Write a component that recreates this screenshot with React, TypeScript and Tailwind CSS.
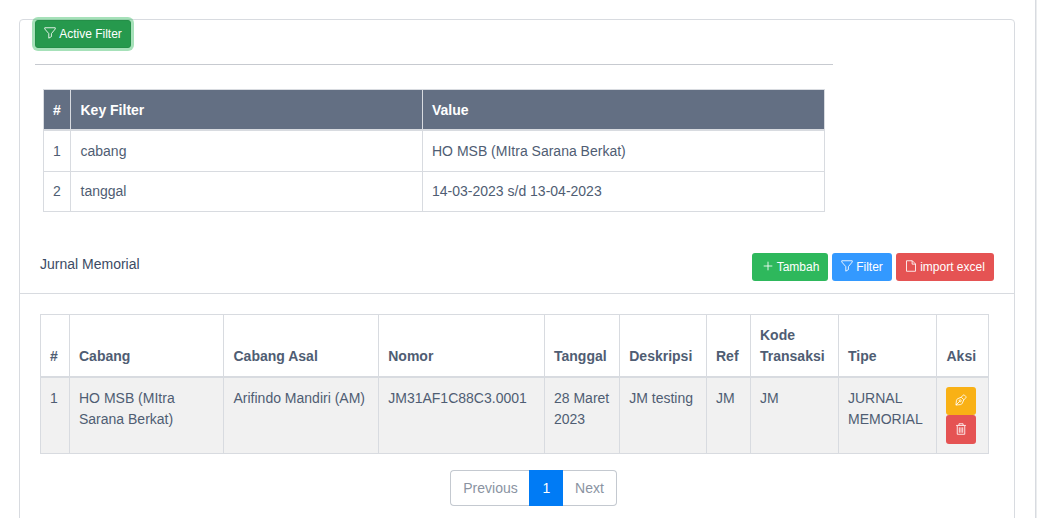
import type { ReactNode } from 'react';

function Icon({ children, className = '' }: { children: ReactNode; className?: string }) {
  return (
    <svg viewBox="0 0 512 512" fill="none" stroke="currentColor" strokeWidth="36" className={`shrink-0 ${className}`}>
      {children}
    </svg>
  );
}

const FilterIcon = () => (
  <Icon className="-mt-0.5 h-3 w-3">
    <path d="M32 32H480V84L316 282V410L204 476V282L32 84Z" />
  </Icon>
);

const PlusIcon = () => (
  <Icon className="-mt-0.5 h-3 w-3">
    <path d="M256 72V440M72 256H440" />
  </Icon>
);

const FileIcon = () => (
  <Icon className="-mt-0.5 h-3 w-3">
    <path d="M64 32H312L448 168V480H64ZM304 32V176H448" />
  </Icon>
);

const PenIcon = () => (
  <Icon className="-mt-px h-3 w-3">
    <path d="M40 472L62 270Q72 220 120 200L266 136L376 246L312 392Q292 440 242 450ZM40 472L196 316M266 136L346 50Q376 20 406 50L462 106Q492 136 462 166L376 246" />
    <circle cx="222" cy="290" r="44" />
  </Icon>
);

const TrashIcon = () => (
  <Icon className="h-3 w-3">
    <path d="M96 120V480H416V120M48 104H464M168 104V32H344V104M184 184V416M256 184V416M328 184V416" />
  </Icon>
);

const filters = [
  { cells: ['1', 'cabang', 'HO MSB (MItra Sarana Berkat)'], height: 'h-[42px]', offset: 'pt-px' },
  { cells: ['2', 'tanggal', '14-03-2023 s/d 13-04-2023'], height: 'h-[40px]', offset: 'pt-0' },
];

const filterPadding = ['pl-[9px]', 'pl-[9.5px]', 'pl-[9px]'];

const columns = [
  { label: '#', width: 'w-[29px]', padding: 'pl-[9px]' },
  { label: 'Cabang', width: 'w-[154px]', padding: 'pl-[9px]' },
  { label: 'Cabang Asal', width: 'w-[155px]', padding: 'pl-[9.5px]' },
  { label: 'Nomor', width: 'w-[166px]', padding: 'pl-[9.25px]' },
  { label: 'Tanggal', width: 'w-[75px]', padding: 'pl-[9px]' },
  { label: 'Deskripsi', width: 'w-[87px]', padding: 'pl-[9.25px]' },
  { label: 'Ref', width: 'w-[44px]', padding: 'pl-[9px]' },
  { label: 'Kode Transaksi', width: 'w-[88px]', padding: 'pl-[9px]' },
  { label: 'Tipe', width: 'w-[98px]', padding: 'pl-[9px]' },
  { label: 'Aksi', width: 'w-[52px]', padding: 'pl-[9.5px]' },
];

const row = [
  '1',
  'HO MSB (MItra Sarana Berkat)',
  'Arifindo Mandiri (AM)',
  'JM31AF1C88C3.0001',
  '28 Maret 2023',
  'JM testing',
  'JM',
  'JM',
  'JURNAL MEMORIAL',
];

const button = 'flex h-7 items-center justify-center rounded-[3px] text-xs leading-[14px] text-white';

export default function App() {
  return (
    <div className="flex h-[518px] w-[1037px] overflow-hidden bg-white font-['Liberation_Sans',Arial,sans-serif] text-sm leading-[21px] text-[#4f5d73]">
      <main className="h-full w-[1035px] shrink-0 pl-[19px] pt-[19px]">
        <section className="h-[520px] w-[996px] rounded-[4px] border border-[#d8dbe0]">
          <div className="h-[233px] w-[813px] pl-[15px]">
            <button className={`${button} w-24 gap-[3px] border border-[#248f48] bg-[#26994d] shadow-[0_0_0_3px_rgba(77,195,116,0.5)]`}>
              <FilterIcon />
              Active Filter
            </button>
            <hr className="mt-4 border-[#c7cad0]" />
            <table className="ml-2 mt-6 w-[782px] table-fixed border-collapse">
              <colgroup>
                <col className="w-[27px]" />
                <col className="w-[352px]" />
                <col className="w-[402px]" />
              </colgroup>
              <thead>
                <tr className="h-[40px] bg-[#636f83] text-left text-white">
                  {['#', 'Key Filter', 'Value'].map((label, index) => (
                    <th key={label} className={`border border-b-2 border-[#d8dbe0] pb-0 pr-0 pt-0.5 ${filterPadding[index]}`}>{label}</th>
                  ))}
                </tr>
              </thead>
              <tbody>
                {filters.map(({ cells, height, offset }) => (
                  <tr key={cells[0]} className={height}>
                    {cells.map((cell, index) => (
                      <td key={cell} className={`border border-[#d8dbe0] pb-0 pr-0 ${offset} ${filterPadding[index]}`}>{cell}</td>
                    ))}
                  </tr>
                ))}
              </tbody>
            </table>
          </div>

          <header className="flex h-[41px] justify-between border-b border-[#d8dbe0] pl-5 pr-5">
            <h1 className="pt-px text-[#3c4b64]">Jurnal Memorial</h1>
            <div className="flex gap-1">
              <button className={`${button} w-[76px] gap-[3px] bg-[#2eb85c] pl-px`}>
                <PlusIcon />
                Tambah
              </button>
              <button className={`${button} w-[60px] gap-[3px] bg-[#3399ff]`}>
                <FilterIcon />
                Filter
              </button>
              <button className={`${button} w-[98px] gap-[3px] bg-[#e55353]`}>
                <FileIcon />
                import excel
              </button>
            </div>
          </header>

          <div className="pl-5 pt-5">
            <table className="w-[949px] table-fixed border-collapse">
              <colgroup>
                {columns.map(({ label, width }) => (
                  <col key={label} className={width} />
                ))}
              </colgroup>
              <thead>
                <tr className="h-[62px] text-left align-bottom">
                  {columns.map(({ label, padding }) => (
                    <th key={label} className={`border border-b-2 border-[#d8dbe0] pb-[9px] pr-0 pt-0 ${padding}`}>{label}</th>
                  ))}
                </tr>
              </thead>
              <tbody>
                <tr className="h-[77px] bg-[#f1f1f1] align-top">
                  {row.map((cell, index) => (
                    <td key={index} className={`border border-[#d8dbe0] pb-0 pr-[5px] pt-[10px] ${columns[index].padding}`}>{cell}</td>
                  ))}
                  <td className="border border-[#d8dbe0] pb-0 pl-[9px] pr-0 pt-[9px]">
                    <button aria-label="Edit" className={`${button} w-[30px] bg-[#f9b115]`}>
                      <PenIcon />
                    </button>
                    <button aria-label="Delete" className={`${button} h-[29px] w-[30px] bg-[#e55353]`}>
                      <TrashIcon />
                    </button>
                  </td>
                </tr>
              </tbody>
            </table>
          </div>

          <nav className="ml-[430px] mt-4 flex h-9 w-[167px] text-[#8a93a2]">
            <span className="flex w-[79px] items-center justify-center rounded-l-[4px] border border-r-0 border-[#c4c9d0] pl-px">Previous</span>
            <span className="flex w-[34px] items-center justify-center bg-[#007bf5] pl-px text-white">1</span>
            <span className="flex w-[54px] items-center justify-center rounded-r-[4px] border border-l-0 border-[#c4c9d0]">Next</span>
          </nav>
        </section>
      </main>
      <div className="w-0.5 border-l border-[#d8dbe0] bg-[#ebedef]" />
    </div>
  );
}
